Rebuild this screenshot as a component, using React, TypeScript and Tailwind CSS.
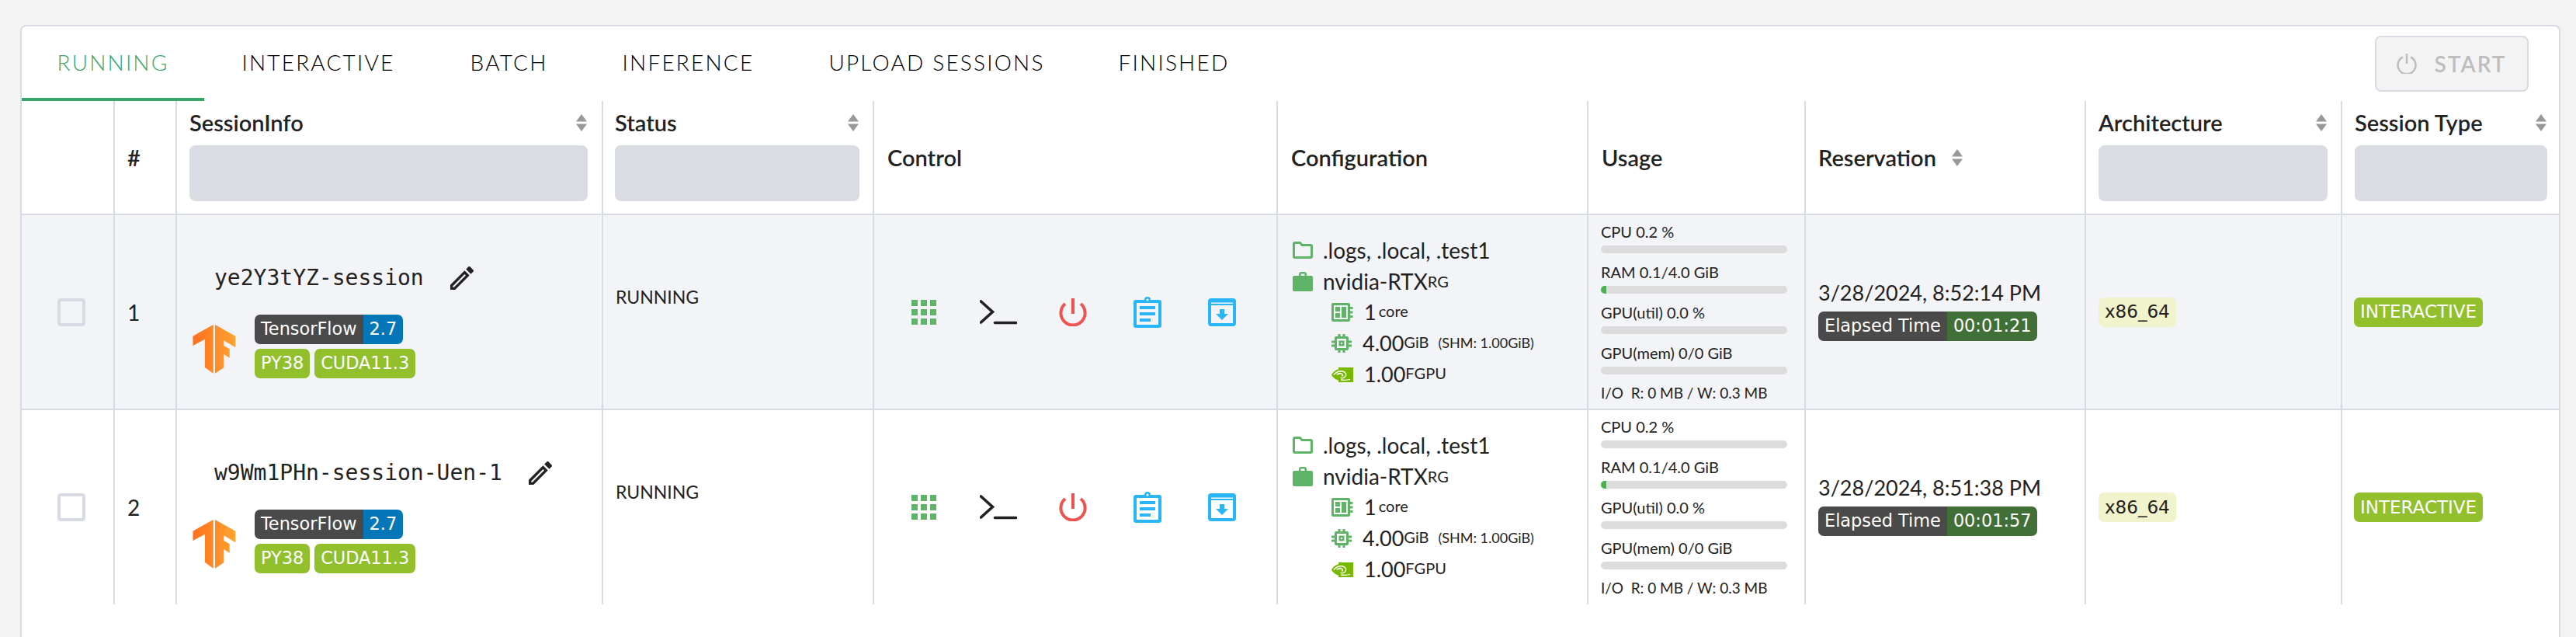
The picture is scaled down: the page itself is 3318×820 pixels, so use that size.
import { useId } from 'react';

const tabs = [
    { label: 'RUNNING', width: 'w-[235px]' },
    { label: 'INTERACTIVE', width: 'w-[294px]' },
    { label: 'BATCH', width: 'w-[197px]' },
    { label: 'INFERENCE', width: 'w-[265px]' },
    { label: 'UPLOAD SESSIONS', width: 'w-[375px]' },
    { label: 'FINISHED', width: 'w-[236px]' },
];

const sessions = [
    { id: 1, name: 'ye2Y3tYZ-session', date: '3/28/2024, 8:52:14 PM', elapsed: '00:01:21', rowStyle: 'h-[251px] border-b-2 bg-[#f3f4f7]' },
    { id: 2, name: 'w9Wm1PHn-session-Uen-1', date: '3/28/2024, 8:51:38 PM', elapsed: '00:01:57', rowStyle: 'h-[250px] bg-white' },
];

const SortArrows = () => (
    <svg width="16" height="22" viewBox="0 0 16 22" className="shrink-0">
        <path d="M8 0l7 9.5H1z" fill="#999" />
        <path d="M8 22l7-9.5H1z" fill="#999" />
    </svg>
);

const Badge = ({ children, color, text = 'text-white', size = 'text-[22.4px]' }: { children: React.ReactNode; color: string; text?: string; size?: string }) => (
    <span className={`inline-flex h-[38px] items-center px-2 rounded-[7px] font-['DejaVu_Sans',sans-serif] whitespace-nowrap ${size} ${color} ${text}`}>
        {children}
    </span>
);

const TensorFlowLogo = () => {
    const id = useId();
    return (
        <svg width="56" height="63" viewBox="0 0 56 63" className="shrink-0 mt-[13px]">
            <defs>
                <linearGradient id={id} x1="0" y1="0" x2="56" y2="0" gradientUnits="userSpaceOnUse">
                    <stop offset="0" stopColor="#ff6f1e" />
                    <stop offset="1" stopColor="#ffa431" />
                </linearGradient>
            </defs>
            <path d="M26.7 0L.5 14.7V27L16 18.7V55l10.7 7.7z" fill={`url(#${id})`} />
            <path d="M29 0l26.3 14.7v14.6l-15-9V27l7.4 4.3v11.4L40.3 38v17.3L29 62.7z" fill={`url(#${id})`} />
        </svg>
    );
};

const PencilIcon = () => (
    <svg width="40" height="40" viewBox="0 0 24 24" fill="#222" className="shrink-0">
        <path d="M3 17.25V21h3.75L17.81 9.94l-3.75-3.75L3 17.25zM5.92 19H5v-.92l9.06-9.06.92.92L5.92 19zM20.71 5.63l-2.34-2.34c-.39-.39-1.02-.39-1.41 0l-1.83 1.83 3.75 3.75 1.83-1.83c.39-.39.39-1.02 0-1.41z" />
    </svg>
);

const AppsIcon = () => (
    <svg width="32" height="32" viewBox="0 0 32 32" fill="#5fb366">
        {[0, 12, 24].map((y) => [0, 12, 24].map((x) => <rect key={`${x}-${y}`} x={x} y={y} width="8" height="8" />))}
    </svg>
);

const TerminalIcon = () => (
    <svg width="48" height="32" viewBox="0 0 48 32" fill="none" stroke="#222" strokeWidth="3.6" strokeLinecap="round" strokeLinejoin="miter">
        <path d="M1.5 2l15 13.5L1.5 29" />
        <path d="M19.5 29.5h27" />
    </svg>
);

const PowerIcon = () => (
    <svg width="36" height="36" viewBox="0 0 36 36" fill="none" stroke="#ef5350" strokeWidth="4">
        <path d="M18 0v20" />
        <path d="M8 7a15.6 15.6 0 1 0 20 0" />
    </svg>
);

const ClipboardIcon = () => (
    <svg width="36" height="40" viewBox="0 0 36 40" fill="#29b6f6">
        <path fillRule="evenodd" d="M3 4h11a4 4 0 0 1 8 0h11a3 3 0 0 1 3 3v30a3 3 0 0 1-3 3H3a3 3 0 0 1-3-3V7a3 3 0 0 1 3-3zm1 4v28h28V8zM18 2.5a1.5 1.5 0 1 0 0 3 1.5 1.5 0 0 0 0-3z" />
        <rect x="8" y="12" width="20" height="4" />
        <rect x="8" y="20" width="20" height="4" />
        <rect x="8" y="28" width="14" height="4" />
    </svg>
);

const ArchiveIcon = () => (
    <svg width="36" height="36" viewBox="0 0 36 36" fill="#29b6f6">
        <path fillRule="evenodd" d="M4 0h28a4 4 0 0 1 4 4v28a4 4 0 0 1-4 4H4a4 4 0 0 1-4-4V4a4 4 0 0 1 4-4zm0 5.500v1.500h28V5.500zM4 9v23h28V9z" />
        <path d="M15 14h6v6h5l-8 8-8-8h5z" />
    </svg>
);

const FolderIcon = () => (
    <svg width="26" height="22" viewBox="0 0 26 22" fill="none" className="shrink-0">
        <path d="M2.500 1.500h7l2.500 3h11.500a1.500 1.500 0 0 1 1 1v14a1.500 1.500 0 0 1-1 1h-21a1.500 1.500 0 0 1-1-1v-17a1.500 1.500 0 0 1 1-1z" stroke="#5fb366" strokeWidth="3" />
    </svg>
);

const BriefcaseIcon = () => (
    <svg width="26" height="25" viewBox="0 0 26 25" fill="#5fb366" className="shrink-0">
        <path fillRule="evenodd" d="M8 5V3a3 3 0 0 1 3-3h4a3 3 0 0 1 3 3v2h6a2 2 0 0 1 2 2v16a2 2 0 0 1-2 2H2a2 2 0 0 1-2-2V7a2 2 0 0 1 2-2zm2.500 0h5V2.500h-5z" />
    </svg>
);

const CpuIcon = () => (
    <svg width="28" height="24" viewBox="0 0 28 24" fill="#5fb366" className="shrink-0">
        <path fillRule="evenodd" d="M2 0h20a2 2 0 0 1 2 2v20a2 2 0 0 1-2 2H2a2 2 0 0 1-2-2V2a2 2 0 0 1 2-2zm1 3v18h18V3z" />
        <rect x="5" y="5" width="6" height="6" />
        <rect x="13" y="5" width="6" height="14" />
        <rect x="5" y="13" width="6" height="6" />
        <rect x="24" y="5" width="3.500" height="3" />
        <rect x="24" y="10.500" width="3.500" height="3" />
        <rect x="24" y="16" width="3.500" height="3" />
    </svg>
);

const MemoryIcon = () => (
    <svg width="26" height="24" viewBox="0 0 26 24" fill="#5fb366" className="shrink-0">
        <path fillRule="evenodd" d="M6 3h14a2 2 0 0 1 2 2v14a2 2 0 0 1-2 2H6a2 2 0 0 1-2-2V5a2 2 0 0 1 2-2zm1 3v12h12V6z" />
        <path fillRule="evenodd" d="M9.500 8.500h7v7h-7zm2.500 2.500v2h2v-2z" />
        <path d="M8.500 0h3v3h-3zM14.500 0h3v3h-3zM8.500 21h3v3h-3zM14.500 21h3v3h-3zM0 8.500h4v3H0zM0 13.500h4v3H0zM22 8.500h4v3h-4zM22 13.500h4v3h-4z" />
    </svg>
);

const NvidiaIcon = () => (
    <svg width="28" height="19" viewBox="0 0 28 19" className="shrink-0">
        <path d="M9 0h19v19H9v-2.500C4.500 15.500 1.500 12.500 0 9.500 1.500 6.500 4.500 3.500 9 2.500z" fill="#76b900" />
        <path d="M3 9.500C6 6 10 4 14.500 5c4 1 5.500 4.500 3 7-1.800 1.800-4.500 2-6 1" fill="none" stroke="#fff" strokeWidth="1.500" />
        <path d="M7 9.500c1.800-1.800 4.200-2.200 6-1.400 1.800.8 1.800 2.600.2 3.200" fill="none" stroke="#fff" strokeWidth="1.500" />
        <path d="M12 15.800c4 .8 8 .6 12-.3" fill="none" stroke="#fff" strokeWidth="1.200" />
    </svg>
);

const StartIcon = () => (
    <svg width="26" height="26" viewBox="0 0 26 26" fill="none" stroke="#bdbdbd" strokeWidth="2.500" className="shrink-0">
        <path d="M13 0v13" />
        <path d="M8 4.500a11.500 11.500 0 1 0 10 0" />
    </svg>
);

const UsageBar = ({ label, fill }: { label: string; fill?: boolean }) => (
    <div className="flex flex-col">
        <div className="h-[26px] leading-[26px] text-[20px]">{label}</div>
        <div className="mt-[5px] mb-[11px] h-[10px] w-[240px] rounded-[5px] bg-[#dcdcdc] overflow-hidden">
            {fill && <div className="h-full w-[7px] bg-[#4caf50]" />}
        </div>
    </div>
);

const HeaderTitle = ({ title, sort }: { title: string; sort?: boolean }) => (
    <div className="flex items-center justify-between h-[22px]">
        <span className="text-[29px] font-semibold">{title}</span>
        {sort && <SortArrows />}
    </div>
);

const FilterHeader = ({ title, border = true, margin }: { title: string; border?: boolean; margin: string }) => (
    <div className={`flex flex-col pt-[17px] border-[#d8dbe3] ${border ? 'border-r-2' : ''} ${margin}`}>
        <HeaderTitle title={title} sort />
        <div className="mt-[18px] h-[72px] rounded-[8px] bg-[#d9dce3]" />
    </div>
);

const PlainHeader = ({ title, sort, padding = 'pl-[17px]' }: { title: string; sort?: boolean; padding?: string }) => (
    <div className={`flex items-center gap-[19px] border-r-2 border-[#d8dbe3] ${padding}`}>
        <span className="text-[29px] font-semibold">{title}</span>
        {sort && <SortArrows />}
    </div>
);

const Row = ({ session }: { session: (typeof sessions)[number] }) => (
    <div className={`grid grid-cols-[120px_80px_549px_349px_520px_400px_280px_361px_330px_279px] border-[#d8dbe3] ${session.rowStyle}`}>
        <div className="flex items-center pl-[46px] border-r-2 border-[#d8dbe3]">
            <div className="w-[36px] h-[36px] rounded-[4px] border-[4px] border-[#d8dbe3]" />
        </div>
        <div className="flex items-center pl-[16px] text-[28px] border-r-2 border-[#d8dbe3]">{session.id}</div>
        <div className="flex flex-col pt-[61px] pl-[20px] border-r-2 border-[#d8dbe3]">
            <div className="flex items-center h-[40px] pl-[28px] gap-[29px]">
                <span className="text-[28px] font-['DejaVu_Sans_Mono',monospace] whitespace-nowrap">{session.name}</span>
                <PencilIcon />
            </div>
            <div className="flex items-start gap-[24px] mt-[27px]">
                <TensorFlowLogo />
                <div className="flex flex-col gap-[6px]">
                    <div className="flex">
                        <Badge color="bg-[#4a4a4a] rounded-r-none">TensorFlow</Badge>
                        <Badge color="bg-[#0577b8] rounded-l-none">2.7</Badge>
                    </div>
                    <div className="flex gap-[6px]">
                        <Badge color="bg-[#91c02c]">PY38</Badge>
                        <Badge color="bg-[#91c02c]">CUDA11.3</Badge>
                    </div>
                </div>
            </div>
        </div>
        <div className="pl-[16px] pt-[92px] text-[23px] leading-[26px] border-r-2 border-[#d8dbe3]">RUNNING</div>
        <div className="flex items-center pl-[16px] border-r-2 border-[#d8dbe3]">
            <div className="flex items-center justify-center w-[96px]"><AppsIcon /></div>
            <div className="flex items-center justify-center w-[96px]"><TerminalIcon /></div>
            <div className="flex items-center justify-center w-[96px]"><PowerIcon /></div>
            <div className="flex items-center justify-center w-[96px]"><ClipboardIcon /></div>
            <div className="flex items-center justify-center w-[96px]"><ArchiveIcon /></div>
        </div>
        <div className="flex flex-col pt-[25px] pl-[19px] border-r-2 border-[#d8dbe3]">
            <div className="flex items-center gap-[13px] h-[40px] text-[28px]">
                <FolderIcon />
                <span>.logs, .local, .test1</span>
            </div>
            <div className="flex items-center gap-[13px] h-[40px] text-[28px]">
                <BriefcaseIcon />
                <span>nvidia-RTX<span className="text-[20px] align-[3px]">RG</span></span>
            </div>
            <div className="flex items-center gap-[14px] h-[40px] pl-[50px] text-[27px]">
                <CpuIcon />
                <span>1<span className="text-[20px] align-[4px] ml-[3px]">core</span></span>
            </div>
            <div className="flex items-center gap-[14px] h-[40px] pl-[50px] text-[27px]">
                <MemoryIcon />
                <span>4.00<span className="text-[20px] align-[4px]">GiB</span><span className="text-[18px] align-[4px] ml-[12px]">(SHM: 1.00GiB)</span></span>
            </div>
            <div className="flex items-center gap-[14px] h-[40px] pl-[50px] text-[27px]">
                <NvidiaIcon />
                <span>1.00<span className="text-[20px] align-[4px]">FGPU</span></span>
            </div>
        </div>
        <div className="flex flex-col pt-[8px] pl-[16px] border-r-2 border-[#d8dbe3]">
            <UsageBar label="CPU 0.2 %" />
            <UsageBar label="RAM 0.1/4.0 GiB" fill />
            <UsageBar label="GPU(util) 0.0 %" />
            <UsageBar label="GPU(mem) 0/0 GiB" />
            <div className="h-[26px] leading-[26px] text-[19px] whitespace-pre">I/O  R: 0 MB / W: 0.3 MB</div>
        </div>
        <div className="flex flex-col pt-[80px] pl-[16px] border-r-2 border-[#d8dbe3]">
            <div className="h-[40px] leading-[40px] text-[27px] whitespace-nowrap">{session.date}</div>
            <div className="flex mt-[4px]">
                <Badge color="bg-[#4a4a4a] rounded-r-none">Elapsed Time</Badge>
                <Badge color="bg-[#406f37] rounded-l-none">{session.elapsed}</Badge>
            </div>
        </div>
        <div className="flex items-center pl-[16px] border-r-2 border-[#d8dbe3]">
            <Badge color="bg-[#f1f3cd]" text="text-[#222]" size="text-[23px]">x86_64</Badge>
        </div>
        <div className="flex items-center pl-[15px]">
            <Badge color="bg-[#91c02c]" size="text-[23px]">INTERACTIVE</Badge>
        </div>
    </div>
);

export default function App() {
    return (
        <div className="h-[820px] overflow-hidden bg-[#f3f3f3] pt-[32px] pl-[26px] pr-[20px] font-['Lato',sans-serif] text-[#222]">
            <div className="h-[788px] bg-white border-2 border-b-0 border-[#d8dbe3] rounded-t-[8px]">
                <div className="flex items-start h-[96px]">
                    {tabs.map((tab, i) => (
                        <div
                            key={tab.label}
                            className={`flex items-center justify-center h-[96px] text-[28px] font-light tracking-[2.2px] whitespace-nowrap border-b-4 ${tab.width} ${i === 0 ? 'text-[#37a66b] border-[#37a66b]' : 'text-black border-transparent'}`}
                        >
                            {tab.label}
                        </div>
                    ))}
                    <div className="ml-auto mr-[39px] mt-[12px] flex items-center justify-center gap-[22px] w-[198px] h-[72px] rounded-[8px] border-2 border-[#d8dbe3] bg-[#f3f3f3] text-[#bdbdbd] text-[28px] font-semibold tracking-[2px]">
                        <StartIcon />
                        START
                    </div>
                </div>
                <div className="grid grid-cols-[120px_80px_549px_349px_520px_400px_280px_361px_330px_279px] h-[147px] border-b-2 border-[#d8dbe3]">
                    <div className="border-r-2 border-[#d8dbe3]" />
                    <PlainHeader title="#" padding="pl-[16px]" />
                    <FilterHeader title="SessionInfo" margin="pl-[16px] pr-[18px]" />
                    <FilterHeader title="Status" margin="pl-[15px] pr-[17px]" />
                    <PlainHeader title="Control" />
                    <PlainHeader title="Configuration" />
                    <PlainHeader title="Usage" />
                    <PlainHeader title="Reservation" sort padding="pl-[16px]" />
                    <FilterHeader title="Architecture" margin="pl-[16px] pr-[17px]" />
                    <FilterHeader title="Session Type" border={false} margin="pl-[16px] pr-[15px]" />
                </div>
                {sessions.map((session) => (
                    <Row key={session.id} session={session} />
                ))}
            </div>
        </div>
    );
}
